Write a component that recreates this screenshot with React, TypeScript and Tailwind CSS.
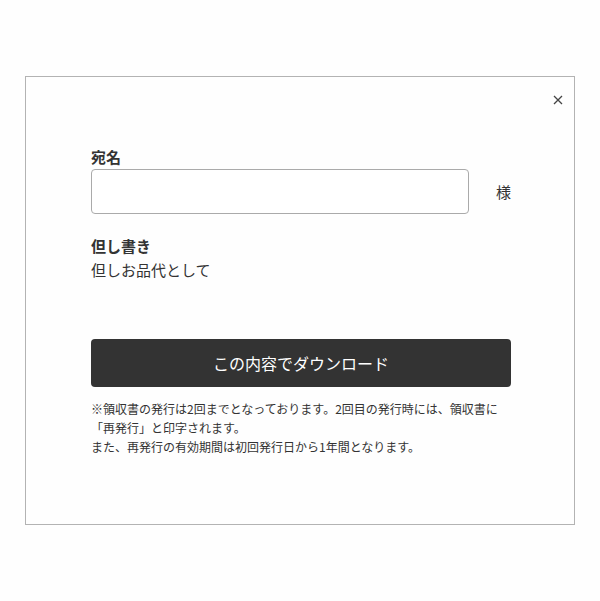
import { useState } from "react";

const font = {
  fontFamily: '"Noto Sans CJK JP", "Noto Sans", "Liberation Sans", sans-serif',
};

export default function App() {
  const [name, setName] = useState("");

  return (
    <div className="min-h-[601px] w-[600px] bg-[#fefefe] pt-[76px] text-[#333]" style={font}>
      <div className="relative mx-[25px] h-[449px] w-[550px] border border-[#b3b3b3] bg-[#fefefe] pl-[65px] pr-[63px] pt-[69px]">
        <button
          type="button"
          aria-label="Close"
          className="absolute right-[9px] top-[16px] flex h-[14px] w-[14px] items-center justify-center"
        >
          <svg width="10" height="10" viewBox="0 0 10 10" fill="none" stroke="#444" strokeWidth="1.3">
            <path d="M1 1 L9 9 M9 1 L1 9" />
          </svg>
        </button>

        {/* 宛名 */}
        <div className="text-[15px] font-bold leading-[22px]">宛名</div>
        <div className="mt-px flex items-center">
          <input
            value={name}
            onChange={(e) => setName(e.target.value)}
            className="h-[45px] w-[378px] rounded-[4px] border border-[#aaa] bg-white px-3 text-[15px] outline-none"
          />
          <span className="ml-auto text-[15px] leading-[22px]">様</span>
        </div>

        {/* 但し書き */}
        <div className="mt-[21px] text-[15px] font-bold leading-[22px]">但し書き</div>
        <div className="mt-[2px] text-[15px] leading-[22px]">但しお品代として</div>

        <button
          type="button"
          className="mt-[58px] flex h-[48px] w-full items-center justify-center rounded-[4px] bg-[#333] text-[16px] text-white"
        >
          この内容でダウンロード
        </button>

        <p className="mt-[12px] text-[12px] leading-[19px]">
          ※領収書の発行は2回までとなっております。2回目の発行時には、領収書に
          <br />
          「再発行」と印字されます。
          <br />
          また、再発行の有効期間は初回発行日から1年間となります。
        </p>
      </div>
    </div>
  );
}
